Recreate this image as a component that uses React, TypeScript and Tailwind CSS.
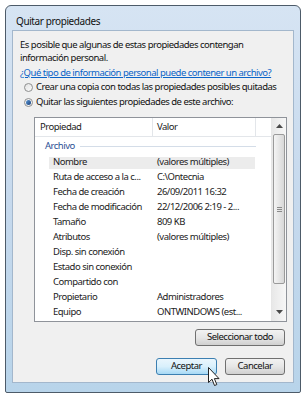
export default function App() {
  const rows: [string, string][] = [
    ["Nombre", "(valores múltiples)"],
    ["Ruta de acceso a la c...", "C:\\Ontecnia"],
    ["Fecha de creación", "26/09/2011 16:32"],
    ["Fecha de modificación", "22/12/2006 2:19 - 2..."],
    ["Tamaño", "809 KB"],
    ["Atributos", "(valores múltiples)"],
    ["Disp. sin conexión", ""],
    ["Estado sin conexión", ""],
    ["Compartido con", ""],
    ["Propietario", "Administradores"],
    ["Equipo", "ONTWINDOWS (est..."],
  ];
  return (
    <div className="w-[306px] h-[399px] bg-white pt-[5px] pl-[5px] font-['Noto_Sans',sans-serif] text-[9.5px] tracking-[-0.5px] text-black relative">
      <div className="w-[296px] h-[388px] rounded-t-[6px] rounded-b-[2px] border border-[#4d5b69] bg-gradient-to-b from-[#d6e4f3] via-[#c6d9ed] to-[#b8d4ea] flex flex-col">
        <div className="h-[24px] pl-[10px] pt-[8px] leading-[14px] text-[10px] tracking-[-0.4px] text-[#111]">Quitar propiedades</div>
        <div className="mx-[6px] h-[353px] bg-[#f0f0f0] border border-[#a3b7cc] flex flex-col">
          <div className="pl-[7px] pt-[7px] leading-[13px] text-[#111]">
            <div>Es posible que algunas de estas propiedades contengan</div>
            <div>información personal.</div>
          </div>
          <div className="pl-[7px] mt-[1px] h-[15px] leading-[15px] text-[#0a64c8] underline decoration-[#0a64c8] whitespace-nowrap">¿Qué tipo de información personal puede contener un archivo?</div>
          <div className="pl-[11px] h-[15px] flex items-center gap-[3px] text-[#111] whitespace-nowrap">
            <div className="w-[9px] h-[9px] shrink-0 rounded-full border border-[#8e8f8f] bg-gradient-to-br from-[#e2e2e2] to-[#fbfbfb]" />
            <span>Crear una copia con todas las propiedades posibles quitadas</span>
          </div>
          <div className="pl-[11px] h-[15px] flex items-center gap-[3px] text-[#111] whitespace-nowrap">
            <div className="w-[9px] h-[9px] shrink-0 rounded-full border border-[#8e8f8f] bg-[#f4f4f4] flex items-center justify-center">
              <div className="w-[5px] h-[5px] rounded-full bg-gradient-to-br from-[#5d9ad6] to-[#1a3f7a]" />
            </div>
            <span>Quitar las siguientes propiedades de este archivo:</span>
          </div>
          <div className="ml-[21px] mt-[7px] w-[253px] h-[205px] border border-[#8f939a] bg-white flex">
            <div className="flex-1 flex flex-col">
              <div className="h-[19px] flex border-b border-[#e3e6ea] text-[#222]">
                <div className="w-[118px] pl-[5px] leading-[18px] border-r border-[#e3e6ea]">Propiedad</div>
                <div className="w-[103px] pl-[4px] leading-[18px] border-r border-[#e3e6ea]">Valor</div>
                <div className="flex-1" />
              </div>
              <div className="h-[18px] flex items-center pl-[10px] pr-[15px]">
                <span className="text-[#2b4f95]">Archivo</span>
                <div className="flex-1 ml-[5px] h-px bg-[#d4dde8]" />
              </div>
              {rows.map(([k, v], i) => (
                <div key={i} className="h-[15px] flex items-center">
                  <div className={"ml-[14px] w-[206px] h-[12px] flex items-center text-[#222] " + (i === 0 ? "bg-[#ececec]" : "")}>
                    <div className="w-[108px] pl-[4px] whitespace-nowrap overflow-hidden">{k}</div>
                    <div className="whitespace-nowrap">{v}</div>
                  </div>
                </div>
              ))}
            </div>
            <div className="w-[15px] flex flex-col bg-gradient-to-r from-[#e8e8e8] to-[#f7f7f7] border-l border-[#e6e6e6]">
              <div className="h-[16px] flex items-center justify-center">
                <svg width="7" height="4" viewBox="0 0 7 4"><path d="M0 4 L3.5 0 L7 4 Z" fill="#4a4a4a" /></svg>
              </div>
              <div className="h-[150px] mx-[1px] rounded-[2px] border border-[#9a9a9a] bg-gradient-to-r from-[#f4f4f4] to-[#d8d8d8] flex flex-col items-center justify-center gap-[1px]">
                <div className="w-[5px] h-px bg-[#8a8a8a]" />
                <div className="w-[5px] h-px bg-[#8a8a8a]" />
                <div className="w-[5px] h-px bg-[#8a8a8a]" />
              </div>
              <div className="flex-1" />
              <div className="h-[18px] flex items-center justify-center">
                <svg width="7" height="4" viewBox="0 0 7 4"><path d="M0 0 L3.5 4 L7 0 Z" fill="#4a4a4a" /></svg>
              </div>
            </div>
          </div>
          <div className="flex justify-end pr-[8px] mt-[7px]">
            <div className="w-[90px] h-[17px] rounded-[3px] border border-[#707070] bg-gradient-to-b from-[#f2f2f2] via-[#e6e6e6] to-[#d0d0d0] flex items-center justify-center text-[#111]">Seleccionar todo</div>
          </div>
          <div className="flex justify-end pr-[8px] mt-[12px] gap-[8px]">
            <div className="w-[61px] h-[17px] rounded-[3px] border border-[#3c7fb1] bg-gradient-to-b from-[#eaf6fd] via-[#d9f0fc] to-[#a7d9f5] flex items-center justify-center text-[#111]">Aceptar</div>
            <div className="w-[60px] h-[17px] rounded-[3px] border border-[#707070] bg-gradient-to-b from-[#f2f2f2] via-[#e6e6e6] to-[#d0d0d0] flex items-center justify-center text-[#111]">Cancelar</div>
          </div>
        </div>
      </div>
      <svg className="absolute left-[208px] top-[367px]" width="12" height="20" viewBox="0 0 12 20">
        <path d="M0.5 0.5 L0.5 15.5 L4 12.2 L6.5 18.5 L8.8 17.6 L6.4 11.6 L11 11.6 Z" fill="white" stroke="#222" strokeWidth="1" strokeLinejoin="round" />
      </svg>
    </div>
  );
}
